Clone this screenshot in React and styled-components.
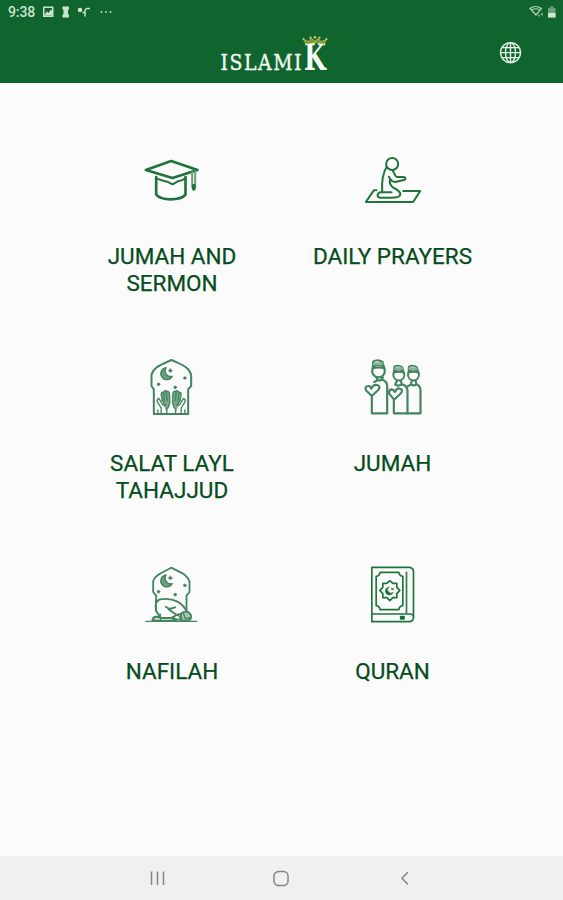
import React from 'react';
import styled, { createGlobalStyle } from 'styled-components';

const GlobalStyle = createGlobalStyle`
  * {
    box-sizing: border-box;
  }

  body {
    margin: 0;
    background: #fbfbfb;
    font-family: Roboto, sans-serif;
  }
`;

const Screen = styled.div`
  display: flex;
  flex-direction: column;
  height: 900px;
  width: 563px;
  overflow: hidden;
`;

const StatusBar = styled.div`
  display: flex;
  justify-content: space-between;
  height: 24px;
  padding-left: 8px;
  padding-right: 3px;
  background: #10652e;
  color: #c9e3cd;
`;

const StatusGroup = styled.div`
  display: flex;
  align-items: center;
`;

const Clock = styled.span`
  width: 33px;
  font-size: 14px;
  font-weight: 500;
  letter-spacing: -0.1px;
  line-height: 24px;
`;

const Header = styled.header`
  display: grid;
  grid-template-columns: 1fr 124px 1fr;
  height: 59px;
  background: #10652e;
`;

const HeaderAction = styled.button`
  grid-column: 3;
  justify-self: end;
  align-self: start;
  display: flex;
  margin: 16px 40px 0 0;
  padding: 0;
  border: 0;
  background: none;
`;

const LogoBox = styled.div`
  grid-column: 2;
  margin-left: -9.5px;
  height: 59px;
`;

const Menu = styled.main`
  flex: 1;
  display: grid;
  grid-template-columns: 220px 221px;
  grid-template-rows: 207px 208px 207px;
  padding: 60px 0 0 62px;
`;

const Tile = styled.div`
  display: flex;
  flex-direction: column;
  align-items: center;
`;

const TileIcon = styled.svg`
  display: block;
  width: ${({ $wide }) => ($wide ? 85 : 75)}px;
  height: 75px;
  fill: none;
  stroke: ${({ $dark }) => ($dark ? '#1f743c' : '#44845e')};
  stroke-width: ${({ $weight }) => $weight || 6};
  stroke-linejoin: round;
  stroke-linecap: round;
`;

const TileLabel = styled.div`
  width: 170px;
  margin-top: 25px;
  color: #064d1c;
  font-size: 22.5px;
  line-height: 27px;
  text-align: center;
  -webkit-text-stroke: 0.25px #064d1c;
`;

const NavBar = styled.nav`
  display: flex;
  align-items: center;
  justify-content: space-between;
  height: 44px;
  padding: 0 148px 0 147px;
  background: #f0f0f0;
`;

const NavIcon = styled.svg`
  width: 20px;
  height: 20px;
  fill: none;
  stroke: #858585;
  stroke-width: 1.5;
`;

const Logo = () => (
  <svg width="124" height="59" viewBox="210 24 124 59">
    <g fill="#f4faf4" stroke="#f4faf4" strokeWidth="0.4" fontFamily="'DejaVu Serif', serif">
      <text transform="translate(220.5 70.3) scale(0.84 1)" fontSize="22.5" letterSpacing="1.8">ISLAMI</text>
      <text transform="translate(304 70.3) scale(0.68 1)" fontSize="37" fontWeight="bold" stroke="none">K</text>
    </g>
    <path
      d="M306 44 L303.5 39.5 L309 41.5 L311 38 L315 41 L318.5 38 L320.5 41.5 L326.5 39.5 L324 44 Q315 41 306 44Z"
      fill="#78993a"
      stroke="#b9bd4b"
      strokeWidth="0.8"
    />
    <g fill="#d8d069">
      <circle cx="303.5" cy="39" r="1" />
      <circle cx="310.5" cy="37.5" r="1" />
      <circle cx="315" cy="37.2" r="1.2" />
      <circle cx="319.5" cy="37.5" r="1" />
      <circle cx="326.5" cy="39" r="1" />
    </g>
  </svg>
);

const Globe = () => (
  <svg width="24" height="24" viewBox="0 0 24 24" fill="none" stroke="#e3f1e4" strokeWidth="1.4">
    <circle cx="11.5" cy="12.6" r="10" />
    <ellipse cx="11.5" cy="12.6" rx="5" ry="10" />
    <path d="M11.5 2.6V22.6M1.5 12.6H21.5M3 7.6H20M3 17.6H20" />
  </svg>
);

const StatusIcons = () => (
  <svg width="76" height="24" viewBox="41 0 76 24" fill="#c9e3cd">
    <path d="M43 6.5H53.5V17H43ZM44.5 8V15.5H52V8Z" fillRule="evenodd" />
    <path d="M44.5 14.5L47 11.5L48.5 13L51 9.5L52 11V15.5H44.5Z" />
    <path d="M62.5 6.5H69V9L68 10.5V14.5H69V17.5H62.5V14.5H63.5V10.5L62.5 9Z" />
    <circle cx="80" cy="10" r="2.3" />
    <path d="M90 8.5H87Q85 9 85 11V16.5M82.5 12.5H85" fill="none" stroke="#c9e3cd" strokeWidth="1.5" />
    <circle cx="101.5" cy="12" r="0.9" />
    <circle cx="106" cy="12" r="0.9" />
    <circle cx="110.5" cy="12" r="0.9" />
  </svg>
);

const SignalIcons = () => (
  <svg width="32" height="24" viewBox="528 0 32 24">
    <g fill="none" stroke="#b4d3b8" strokeWidth="1.2">
      <path d="M530 8.5Q535.5 4.5 541.5 8.5L536 15Z" />
      <path d="M532 10Q536 7.5 539.5 10" />
      <path d="M539 14.5V16.5M542 13V15.5" />
    </g>
    <path d="M548 8H550V6.5H553.5V8H555.5V17.5H548Z" fill="#68a276" />
    <path d="M548 13H555.5V17.5H548Z" fill="#d3e6d2" />
  </svg>
);

const SermonIcon = () => (
  <TileIcon viewBox="-1.5 -6 255 225" $wide $dark $weight={8}>
    <path d="M46 75L122 48L201 75L126 99Z" />
    <path d="M77 96V149Q89 163 120 163Q154 163 165 149V96" />
    <path d="M80 101Q96 108 110 110L126 118L142 109Q155 108 164 100" strokeWidth="6" />
    <path d="M185 81V126M194 79V126" stroke="#65a079" strokeWidth="6" />
    <path d="M190 122V132" strokeWidth="11" />
  </TileIcon>
);

const PrayerIcon = () => (
  <TileIcon viewBox="-1.5 -6 255 225" $wide $dark>
    <circle cx="125" cy="57" r="18" />
    <path d="M108 67C98 83 93 101 95 139M126 76C132 82 130 91 139 96H158C167 97 167 105 157 106L134 111C124 111 119 104 115 95" />
    <path d="M119 103C116 113 118 120 127 127C141 134 154 143 148 152C145 158 134 158 87 158C78 155 80 143 91 142H123" />
    <path d="M78 136H70L46 171H188L209 138H158" />
  </TileIcon>
);

const Crescent = ({ y = 0 }) => (
  <g transform={`translate(0 ${y})`}>
    <path d="M92 53A18 18 0 1 0 110 79A17 17 0 0 1 92 53Z" fill="#6b9f7e" strokeWidth="4" />
    <g fill="#44845e" strokeWidth="2">
      <path d="M105 56L107 60L111 62L107 64L105 68L102 64L98 62L102 60Z" />
      <circle cx="148" cy="84" r="4" />
      <circle cx="69" cy="103" r="4" />
      <circle cx="119" cy="112" r="4" />
    </g>
  </g>
);

const TahajjudIcon = () => (
  <TileIcon viewBox="-1.5 0 225 225" $weight={6}>
    <path d="M55 192V118L48 108V75C54 49 82 43 108 30C134 43 161 49 167 75V108L158 118V192Z" />
    <Crescent />
    <g strokeWidth="4">
      <path d="M80 151L77 133Q79 124 84 128Q87 119 93 124Q101 122 102 132L103 158Q101 170 94 178V191" fill="#79ab8b" />
      <path d="M134 151L137 133Q135 124 130 128Q127 119 121 124Q113 122 112 132L111 158Q113 170 120 178V191" fill="#79ab8b" />
      <path d="M84 129L87 151M92 126L95 152M130 129L127 151M122 126L119 152" />
      <path d="M80 151L90 166L82 165L70 145Q64 147 65 155L77 174V191M134 151L124 166L132 165L144 145Q150 147 149 155L137 174V191" />
      <path d="M67 180V191M148 180V191" />
    </g>
  </TileIcon>
);

const Worshipper = ({ x, y, scale }) => (
  <g transform={`translate(${x} ${y}) scale(${scale})`}>
    <circle cx="0" cy="0" r="19" />
    <path d="M-18 -8Q0 -14 18 -8M-17 -9L-16 -28Q-3 -37 12 -27L17 -9" />
    <path d="M-13 -22H10" stroke="#8ab29a" strokeWidth="9" />
  </g>
);

const JumahIcon = () => (
  <TileIcon viewBox="-1.5 0 225 225" $weight={6.5}>
    <Worshipper x={69} y={63} scale={1} />
    <Worshipper x={130} y={75} scale={0.87} />
    <Worshipper x={174} y={75} scale={0.87} />
    <path d="M63 83L67 91H76L82 83M82 90Q94 94 95 106V190H49V139M66 91L56 96" />
    <path d="M49 138L31 121Q28 108 38 108Q44 107 47 116Q54 102 65 105Q76 108 69 119Z" />
    <path d="M115 190V149M124 93L119 104Q127 110 139 103L136 93M139 103Q153 105 156 120V190H115" />
    <path d="M116 149L101 131Q99 120 107 118Q114 118 118 126Q125 112 134 116Q144 120 136 130Z" />
    <path d="M169 93L166 103Q174 109 183 103L180 93M183 103Q194 107 195 120V190H156M156 110L166 103" />
  </TileIcon>
);

const NafilahIcon = () => (
  <TileIcon viewBox="-1.5 0 225 225" $weight={5.5}>
    <path d="M62 128V113L53 102V69C60 48 85 43 107 29C132 43 155 48 162 70V102L153 113V158" />
    <Crescent y={-2} />
    <path d="M31 190H184" strokeWidth="4" />
    <path d="M61 157Q57 130 73 124Q104 119 126 131Q147 143 154 163M61 157L73 176M61 128L62 161" />
    <path d="M91 146L102 153L119 148M99 154L124 171L142 166M124 171L110 178L124 185H146M74 169V180H108L122 188M73 176H61Q49 178 51 188H119" />
    <path d="M138 180Q132 166 144 162Q160 157 166 171Q170 184 157 189H139Z" fill="#a6c8b1" />
    <path d="M55 179H76V187H55ZM128 171L138 187M143 164L150 183L164 179" strokeWidth="4" />
  </TileIcon>
);

const QuranIcon = () => (
  <TileIcon viewBox="-1.5 0 225 225" $dark $weight={5}>
    <path d="M49 184V28H163Q174 30 174 42V179Q172 191 162 191H49V168H164Q174 168 174 180" />
    <path d="M153 43V165" stroke="#347a4d" />
    <path d="M74 43H130Q132 54 142 55V143Q132 144 130 155H74Q72 144 62 143V55Q72 54 74 43Z" />
    <path d="M103 68L112 76H124V88L133 97L124 107V119H112L103 128L94 119H82V107L73 97L82 88V76H94Z" />
    <path d="M100 87A12 12 0 1 0 113 103A10 10 0 0 1 100 87Z" fill="#1b7138" strokeWidth="2" />
    <path d="M108 91L114 95M114 90L108 96" strokeWidth="3" />
    <path d="M135 175H146V183H135Z" fill="#0b5727" strokeWidth="4" />
  </TileIcon>
);

const items = [
  { label: 'JUMAH AND SERMON', Icon: SermonIcon },
  { label: 'DAILY PRAYERS', Icon: PrayerIcon },
  { label: 'SALAT LAYL TAHAJJUD', Icon: TahajjudIcon },
  { label: 'JUMAH', Icon: JumahIcon },
  { label: 'NAFILAH', Icon: NafilahIcon },
  { label: 'QURAN', Icon: QuranIcon },
];

const App = () => {
  return (
    <Screen>
      <GlobalStyle />
      <StatusBar>
        <StatusGroup>
          <Clock>9:38</Clock>
          <StatusIcons />
        </StatusGroup>
        <StatusGroup>
          <SignalIcons />
        </StatusGroup>
      </StatusBar>

      <Header>
        <LogoBox>
          <Logo />
        </LogoBox>
        <HeaderAction aria-label="Language">
          <Globe />
        </HeaderAction>
      </Header>

      <Menu>
        {items.map(({ label, Icon }) => (
          <Tile key={label}>
            <Icon />
            <TileLabel>{label}</TileLabel>
          </Tile>
        ))}
      </Menu>

      <NavBar>
        <NavIcon viewBox="0 0 20 20">
          <path d="M4.5 3.5V17M10.5 3.5V17M16.5 3.5V17" />
        </NavIcon>
        <NavIcon viewBox="0 0 20 20">
          <rect x="3" y="3.5" width="14" height="14" rx="4.5" />
        </NavIcon>
        <NavIcon viewBox="0 0 20 20">
          <path d="M13 4L7 10.3L13 16.5" />
        </NavIcon>
      </NavBar>
    </Screen>
  );
};

export default App;
